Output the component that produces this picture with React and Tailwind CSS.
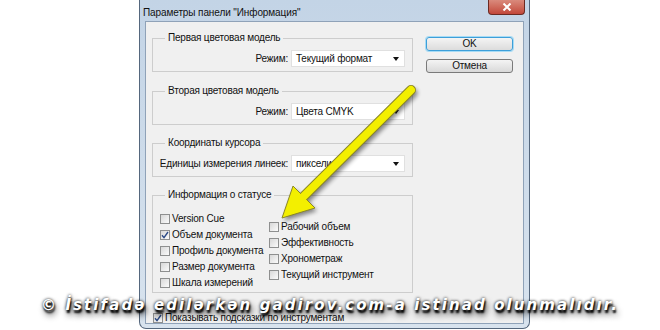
import React from 'react';

const ui = "font-['Liberation_Sans',Arial,sans-serif] text-[10px] tracking-[-0.2px] text-[#111]";

function Select({ value }) {
  return (
    <div className="flex h-[17px] w-[114px] shrink-0 items-center justify-between border border-[#e0e0e0] bg-white pl-[4px] pr-[5px]">
      <span className="whitespace-nowrap leading-[15px]">{value}</span>
      <svg width="6" height="4" viewBox="0 0 6 4">
        <path d="M0 0h6L3 4z" fill="#111" />
      </svg>
    </div>
  );
}

function Group({ title, className = '', children }) {
  return (
    <fieldset className={`border border-[#cdcdcd] ${className}`}>
      <legend className="ml-[12px] whitespace-nowrap px-[3px] leading-[14px]">{title}</legend>
      {children}
    </fieldset>
  );
}

function Check({ label, checked }) {
  return (
    <div className="flex h-[16px] items-center">
      <span className="flex h-[10px] w-[10px] shrink-0 items-center justify-center border border-[#8e8f8f] bg-gradient-to-br from-[#d8d8d8] to-[#fbfbfb]">
        {checked && (
          <svg width="8" height="8" viewBox="0 0 8 8">
            <path d="M1 4.2L3 6.6L7 1" fill="none" stroke="#2c4a86" strokeWidth="1.4" />
          </svg>
        )}
      </span>
      <span className="ml-[2px] whitespace-nowrap leading-[14px]">{label}</span>
    </div>
  );
}

function Row({ label, value }) {
  return (
    <div className="flex items-center justify-end gap-[3px] pb-[4px] pr-[7px] pt-[5px]">
      <span className="whitespace-nowrap">{label}</span>
      <Select value={value} />
    </div>
  );
}

export default function App() {
  return (
    <div className="relative flex h-[330px] w-[660px] overflow-hidden bg-white">
      {/* dialog window */}
      <div className="ml-[139px] flex h-[329px] w-[391px] flex-col rounded-b-[7px] border border-t-0 border-[#55677d] bg-gradient-to-b from-[#c3d4e6] to-[#d8e3ee] px-[5px] pb-[4px]">
        <div className="flex h-[21px] items-start justify-between">
          <span className="-ml-[2px] pt-[6px] font-['Liberation_Sans',Arial,sans-serif] text-[10px] leading-[14px] tracking-[-0.1px] text-[#111]">
            Параметры панели "Информация"
          </span>
          <div className="-mr-[1px] flex h-[15px] w-[37px] items-center justify-center rounded-b-[4px] border border-t-0 border-[#6b2a22] bg-gradient-to-b from-[#d98a7c] to-[#c2473a]">
            <svg width="10" height="8" viewBox="0 0 10 8">
              <path d="M1.5 0.5L8.5 7.5M8.5 0.5L1.5 7.5" stroke="#fff" strokeWidth="2" />
            </svg>
          </div>
        </div>

        <div className={`flex flex-1 overflow-hidden border border-[#8fa2b8] bg-[#f0f0f0] ${ui}`}>
          <div className="flex w-[267px] shrink-0 flex-col pl-[6px]">
            <Group title="Первая цветовая модель" className="mt-[9px]">
              <Row label="Режим:" value="Текущий формат" />
            </Group>
            <Group title="Вторая цветовая модель" className="mt-[12px]">
              <Row label="Режим:" value="Цвета CMYK" />
            </Group>
            <Group title="Координаты курсора" className="mt-[11px]">
              <Row label="Единицы измерения линеек:" value="пиксели" />
            </Group>
            <Group title="Информация о статусе" className="mt-[11px]">
              <div className="flex pb-[1px] pl-[7px]">
                <div className="flex w-[109px] shrink-0 flex-col pt-[9px]">
                  <Check label="Version Cue" />
                  <Check label="Объем документа" checked />
                  <Check label="Профиль документа" />
                  <Check label="Размер документа" />
                  <Check label="Шкала измерений" />
                </div>
                <div className="flex flex-col pt-[17px]">
                  <Check label="Рабочий объем" />
                  <Check label="Эффективность" />
                  <Check label="Хронометраж" />
                  <Check label="Текущий инструмент" />
                </div>
              </div>
            </Group>
            <div className="ml-[1px] mt-[17px]">
              <Check label="Показывать подсказки по инструментам" checked />
            </div>
          </div>

          <div className="ml-[13px] flex flex-col pt-[15px]">
            <button className="h-[14px] w-[87px] rounded-[3px] border border-[#3d9fd9] bg-gradient-to-b from-[#f4f4f4] to-[#dcdcdc] leading-[12px] shadow-[0_0_0_1px_#a6dbf5]">
              OK
            </button>
            <button className="mt-[8px] h-[14px] w-[87px] rounded-[3px] border border-[#7a7a7a] bg-gradient-to-b from-[#f4f4f4] to-[#d9d9d9] leading-[12px]">
              Отмена
            </button>
          </div>
        </div>
      </div>

      {/* yellow arrow */}
      <svg className="pointer-events-none absolute left-0 top-0" width="660" height="330" viewBox="0 0 660 330">
        <defs>
          <filter id="sh" x="-20%" y="-20%" width="140%" height="140%">
            <feGaussianBlur stdDeviation="2" />
          </filter>
        </defs>
        <g filter="url(#sh)" opacity="0.45" transform="translate(2 3)">
          <line x1="411" y1="90" x2="300" y2="200" stroke="#000" strokeWidth="9" strokeLinecap="round" />
          <path d="M282 218L293 186L315 208Z" fill="#000" />
        </g>
        <line x1="411" y1="90" x2="300" y2="200" stroke="#8a8628" strokeWidth="10" strokeLinecap="round" />
        <path d="M282 218L293 186L315 208Z" fill="#f3ef00" stroke="#8a8628" strokeWidth="1" strokeLinejoin="round" />
        <line x1="411" y1="90" x2="302" y2="198" stroke="#f3ef00" strokeWidth="8" strokeLinecap="round" />
      </svg>

      {/* watermark */}
      <div className="pointer-events-none absolute left-0 top-[295px] w-full text-center font-['DejaVu_Sans',sans-serif] text-[15px] font-bold italic leading-[20px] tracking-[2.1px] text-white [text-shadow:1px_3px_2px_#000,0_0_3px_#000,2px_5px_6px_rgba(0,0,0,0.85)]">
        © İstifadə edilərkən gadirov.com-a istinad olunmalıdır.
      </div>
    </div>
  );
}
